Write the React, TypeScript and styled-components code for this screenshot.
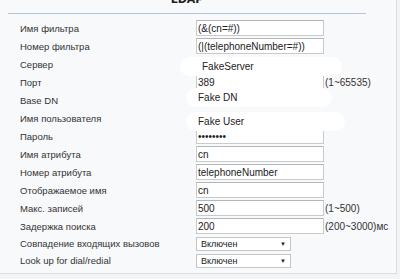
import React from "react";
import styled, { createGlobalStyle } from "styled-components";

const GlobalStyle = createGlobalStyle`
  html, body {
    margin: 0;
    padding: 0;
    background: #f3f4f6;
    font-family: "Liberation Sans", Arial, sans-serif;
  }
`;

type Row =
  | { label: string; kind: "input"; value: string; hint?: string }
  | { label: string; kind: "blob"; value: string; width: number; shift: number; pad: number; dy: number }
  | { label: string; kind: "select"; value: string };

const rows: Row[] = [
  { label: "Имя фильтра", kind: "input", value: "(&(cn=#))" },
  { label: "Номер фильтра", kind: "input", value: "(|(telephoneNumber=#))" },
  { label: "Сервер", kind: "blob", value: "FakeServer", width: 162, shift: -16, pad: 22, dy: 2 },
  { label: "Порт", kind: "input", value: "389", hint: "(1~65535)" },
  { label: "Base DN", kind: "blob", value: "Fake DN", width: 146, shift: -10, pad: 12, dy: -3 },
  { label: "Имя пользователя", kind: "blob", value: "Fake User", width: 159, shift: -10, pad: 12, dy: 3 },
  { label: "Пароль", kind: "input", value: "••••••••" },
  { label: "Имя атрибута", kind: "input", value: "cn" },
  { label: "Номер атрибута", kind: "input", value: "telephoneNumber" },
  { label: "Отображаемое имя", kind: "input", value: "cn" },
  { label: "Макс. записей", kind: "input", value: "500", hint: "(1~500)" },
  { label: "Задержка поиска", kind: "input", value: "200", hint: "(200~3000)мс" },
  { label: "Совпадение входящих вызовов", kind: "select", value: "Включен" },
  { label: "Look up for dial/redial", kind: "select", value: "Включен" },
];

export default function App() {
  return (
    <>
      <GlobalStyle />
      <Panel>
        <Header>
          <Title>LDAP</Title>
        </Header>
        <Form>
          {rows.map((r) => (
            <FormRow key={r.label} $short={r.kind === "select"}>
              <Label>{r.label}</Label>
              <Value>
                {r.kind === "input" && (
                  <>
                    <TextBox type="text" defaultValue={r.value} readOnly />
                    {r.hint && <Hint>{r.hint}</Hint>}
                  </>
                )}
                {r.kind === "blob" && (
                  <Blob $width={r.width} $shift={r.shift} $pad={r.pad} $dy={r.dy}>
                    {r.value}
                  </Blob>
                )}
                {r.kind === "select" && (
                  <SelectBox>
                    <span>{r.value}</span>
                    <Arrow>▼</Arrow>
                  </SelectBox>
                )}
              </Value>
            </FormRow>
          ))}
        </Form>
      </Panel>
    </>
  );
}

const Panel = styled.div`
  width: 397px;
  height: 274px;
  box-sizing: border-box;
  background: #f8f9fb;
  border-right: 1px solid #dcdde0;
  border-bottom: 1px solid #dcdde0;
  overflow: hidden;
`;

const Header = styled.div`
  margin: 0 30px 0 8px;
  height: 13px;
  border-bottom: 1px solid #b6c4da;
  display: flex;
  justify-content: center;
`;

const Title = styled.div`
  font-family: "DejaVu Sans", sans-serif;
  font-weight: bold;
  font-size: 11px;
  line-height: 12px;
  margin-top: -6px;
  color: #222;
`;

const Form = styled.div`
  padding: 5px 0 0 20px;
  display: flex;
  flex-direction: column;
`;

const FormRow = styled.div<{ $short: boolean }>`
  display: grid;
  grid-template-columns: 176px 1fr;
  align-items: center;
  height: ${(p) => (p.$short ? "17px" : "18px")};
`;

const Label = styled.div`
  font-size: 9.5px;
  color: #333;
  white-space: nowrap;
`;

const Value = styled.div`
  display: flex;
  align-items: center;
  height: 100%;
`;

const TextBox = styled.input`
  width: 128px;
  height: 16px;
  box-sizing: border-box;
  border: 1px solid #c9cacc;
  border-top-color: #b4b5b8;
  background: #fff;
  padding: 0 1px;
  margin: 0;
  font-family: "Liberation Sans", Arial, sans-serif;
  font-size: 10px;
  color: #222;
  outline: none;
`;

const Hint = styled.span`
  font-size: 10px;
  color: #333;
  margin-left: 1px;
`;

const Blob = styled.div<{ $width: number; $shift: number; $pad: number; $dy: number }>`
  width: ${(p) => p.$width}px;
  height: 19px;
  margin-left: ${(p) => p.$shift}px;
  transform: translateY(${(p) => p.$dy}px);
  border-radius: 10px;
  background: #fff;
  box-sizing: border-box;
  padding-left: ${(p) => p.$pad}px;
  display: flex;
  align-items: center;
  font-size: 10px;
  color: #222;
`;

const SelectBox = styled.div`
  width: 95px;
  height: 14px;
  box-sizing: border-box;
  border: 1px solid #c4c5c8;
  background: #fff;
  display: flex;
  align-items: center;
  justify-content: space-between;
  padding: 0 4px 0 4px;
  font-size: 9px;
  color: #222;
`;

const Arrow = styled.span`
  font-size: 6px;
  color: #222;
`;
